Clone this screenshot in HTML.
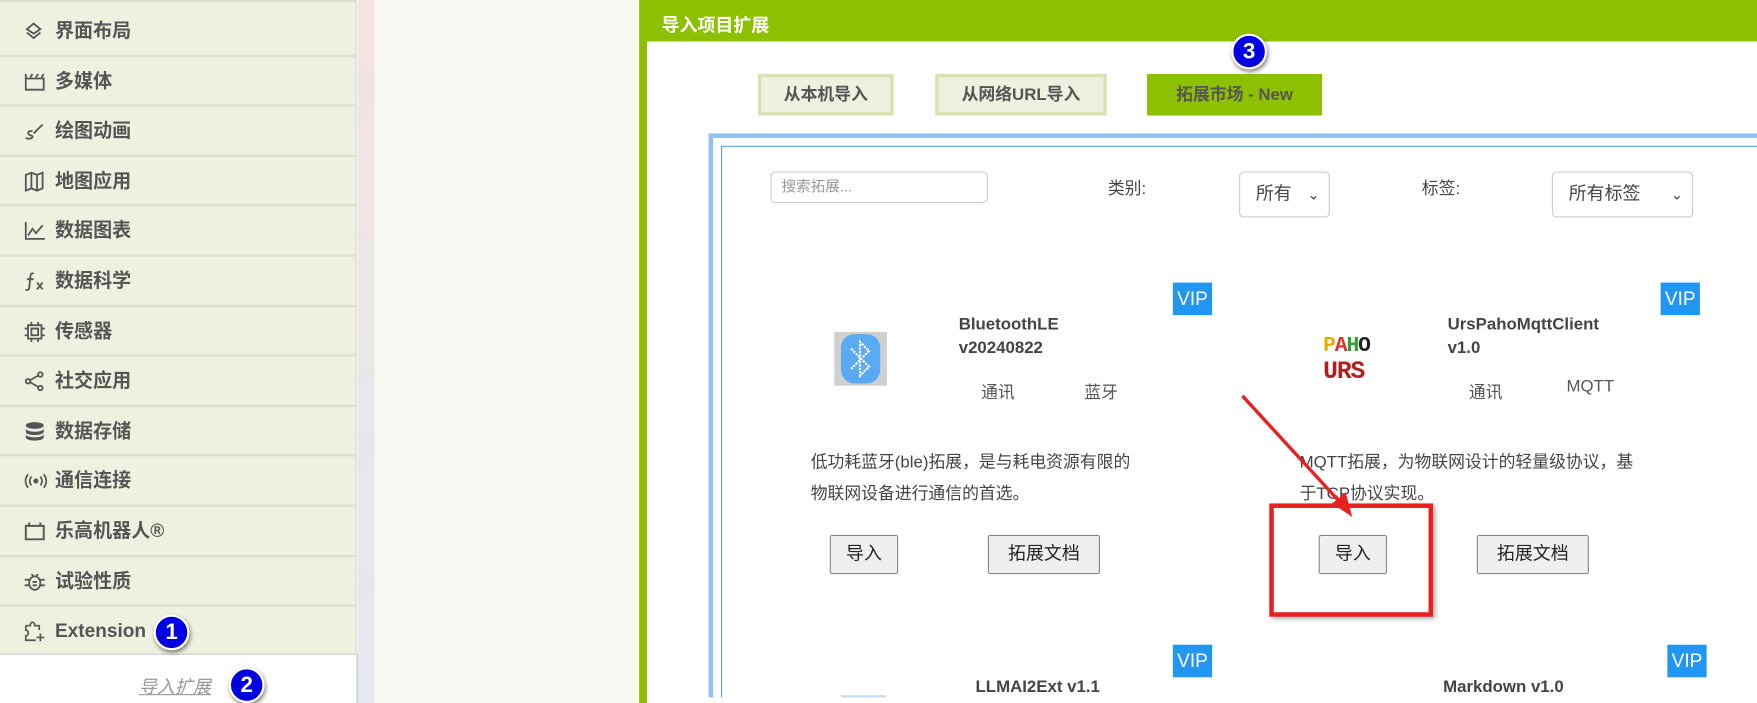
<!DOCTYPE html>
<html><head><meta charset="utf-8">
<style>
*{margin:0;padding:0;box-sizing:border-box}
html,body{width:1757px;height:703px;overflow:hidden;background:#f7f8f2;font-family:"Liberation Sans","Noto Sans CJK SC",sans-serif}
#w{position:absolute;left:0;top:0;width:1567px;height:627px;transform:scale(1.1213);transform-origin:0 0;overflow:hidden}
.a{position:absolute}
.side{left:0;top:0;width:318px;height:627px;background:#eef1e0;border-right:1px solid #d8d8d8;border-top:2px solid #dcdfd0}
.row{position:absolute;left:0;width:318px;height:44.6px;border-bottom:2px solid #dcdfd0;color:#555;font-weight:bold;font-size:17px;line-height:43px}
.row span.t{position:absolute;left:49px;top:0}
.row svg{position:absolute;left:21px;top:13px}
.strip{left:319px;top:0;width:15px;height:627px;background:linear-gradient(#f2e4e0,#e4e8f0)}
.badge{position:absolute;width:32px;height:32px;border-radius:50%;background:#0000e0;color:#fff;font-weight:bold;font-size:20px;text-align:center;line-height:28px;border:2px solid #fff;box-shadow:1px 2px 4px rgba(0,0,0,.5)}
.tab{position:absolute;top:66px;height:37px;border:3px solid #d6e5b0;background:#eef1e0;color:#555;font-weight:bold;font-size:15px;line-height:31px;text-align:center}
.vip{position:absolute;width:35px;height:29px;background:#2196f3;color:#fff;font-size:17px;text-align:center;line-height:29px}
.ttl{position:absolute;color:#444;font-weight:bold;font-size:15px;line-height:21px}
.tag{position:absolute;color:#555;font-size:15px}
.desc{position:absolute;color:#444;font-size:15px;line-height:28px}
.btn{position:absolute;height:35px;border:1px solid #888;border-radius:2px;background:#efefef;color:#222;font-size:16px;text-align:center;line-height:33px}
.sel{position:absolute;height:41px;border:1px solid #ccc;border-radius:4px;background:#fff;color:#444;font-size:16px;line-height:39px;padding-left:14px}
</style></head><body><div id="w">
<div class="a side">
 <div class="row" style="top:4px"><svg width="18" height="18" viewBox="0 0 18 18" fill="none" stroke="#555" stroke-width="1.6"><path d="M9 2 L15 7 L9 11 L3 7 Z M3 10 L9 15 L15 10"/></svg><span class="t">界面布局</span></div>
 <div class="row" style="top:48.6px"><svg width="20" height="18" viewBox="0 0 20 18" fill="none" stroke="#555" stroke-width="1.6"><path d="M2 6 H18 V16 H2 Z M2 6 V2 M6 5 L8 2 M11 5 L13 2 M16 5 L18 2"/></svg><span class="t">多媒体</span></div>
 <div class="row" style="top:93.2px"><svg width="20" height="18" viewBox="0 0 20 18" fill="none" stroke="#555" stroke-width="1.6"><path d="M8 9 C3 8 3 12 7 13 C10 14 6 17 2 15 M9 11 L17 3"/></svg><span class="t">绘图动画</span></div>
 <div class="row" style="top:137.8px"><svg width="20" height="18" viewBox="0 0 20 18" fill="none" stroke="#555" stroke-width="1.6"><path d="M2 3 L7 1 L12 3 L17 1 V15 L12 17 L7 15 L2 17 Z M7 1 V15 M12 3 V17"/></svg><span class="t">地图应用</span></div>
 <div class="row" style="top:182.4px"><svg width="20" height="18" viewBox="0 0 20 18" fill="none" stroke="#555" stroke-width="1.6"><path d="M2 1 V16 H19 M4 13 L8 7 L11 11 L17 4"/></svg><span class="t">数据图表</span></div>
 <div class="row" style="top:227px"><svg width="20" height="18" viewBox="0 0 20 18" fill="none" stroke="#555" stroke-width="1.6"><path d="M9 2 C6 1 6 4 6 6 L5 15 C5 17 2 17 2 16 M3 7 H9 M12 10 L17 16 M17 10 L12 16"/></svg><span class="t">数据科学</span></div>
 <div class="row" style="top:271.6px"><svg width="20" height="18" viewBox="0 0 20 18" fill="none" stroke="#555" stroke-width="1.6"><path d="M4 3 H16 V15 H4 Z M7 6 H13 V12 H7 Z M1 6 H4 M1 12 H4 M16 6 H19 M16 12 H19 M7 0 V3 M13 0 V3 M7 15 V18 M13 15 V18"/></svg><span class="t">传感器</span></div>
 <div class="row" style="top:316.2px"><svg width="20" height="18" viewBox="0 0 20 18" fill="none" stroke="#555" stroke-width="1.6"><circle cx="15" cy="3" r="2"/><circle cx="4" cy="9" r="2"/><circle cx="15" cy="15" r="2"/><path d="M6 8 L13 4 M6 10 L13 14"/></svg><span class="t">社交应用</span></div>
 <div class="row" style="top:360.8px"><svg width="20" height="18" viewBox="0 0 20 18" fill="#555"><ellipse cx="10" cy="3.5" rx="8" ry="3"/><path d="M2 6 C2 10 18 10 18 6 V9 C18 13 2 13 2 9Z M2 11 C2 15 18 15 18 11 V14 C18 18 2 18 2 14Z"/></svg><span class="t">数据存储</span></div>
 <div class="row" style="top:405.4px"><svg width="22" height="18" viewBox="0 0 22 18" fill="none" stroke="#555" stroke-width="1.5"><path d="M4 3 C1 7 1 11 4 15 M7 5 C5 8 5 10 7 13 M18 3 C21 7 21 11 18 15 M15 5 C17 8 17 10 15 13"/><circle cx="11" cy="9" r="1.5" fill="#555"/></svg><span class="t">通信连接</span></div>
 <div class="row" style="top:450px"><svg width="20" height="18" viewBox="0 0 20 18" fill="none" stroke="#555" stroke-width="1.7"><path d="M2 4 H18 V16 H2 Z M5 4 V1 M15 4 V1"/></svg><span class="t">乐高机器人®</span></div>
 <div class="row" style="top:494.6px"><svg width="20" height="18" viewBox="0 0 20 18" fill="none" stroke="#555" stroke-width="1.6"><ellipse cx="10" cy="10" rx="5" ry="6"/><path d="M1 7 H5 M1 12 H5 M15 7 H19 M15 12 H19 M7 2 L9 4 M13 2 L11 4 M8 9 H12 M8 12 H12"/></svg><span class="t">试验性质</span></div>
 <div class="row" style="top:539.2px;border-bottom:1px solid #ccc"><svg width="20" height="20" viewBox="0 0 20 20" style="top:12px" fill="none" stroke="#555" stroke-width="1.5"><path d="M2 5 H6 C6 1 10 1 10 5 H14 V9 M2 5 V9 C5 9 5 14 2 14 V18 H11 M15 12 V19 M11.5 15.5 H18.5"/></svg><span class="t">Extension</span></div>
</div>
<div class="a" style="left:0;top:583px;width:319px;height:44px;background:#fff;border-right:1px solid #bbb;border-top:1px solid #ccc"></div>
<div class="a" style="left:124px;top:599px;color:#999;font-size:16px;font-style:italic;text-decoration:underline">导入扩展</div>
<div class="badge" style="left:137px;top:548px">1</div>
<div class="badge" style="left:204px;top:595px">2</div>
<div class="a strip"></div>

<div class="a" style="left:570px;top:0;width:997px;height:627px;background:#8dc000"></div>
<div class="a" style="left:577px;top:37px;width:990px;height:590px;background:#fff"></div>
<div class="a" style="left:590px;top:9px;color:#fff;font-weight:bold;font-size:16px">导入项目扩展</div>
<div class="tab" style="left:676px;width:121px">从本机导入</div>
<div class="tab" style="left:834px;width:153px">从网络URL导入</div>
<div class="tab" style="left:1023px;width:156px;background:#8dc000;border-color:#8dc000;color:#555">拓展市场 - New</div>
<div class="badge" style="left:1098px;top:30px">3</div>

<div class="a" style="left:632px;top:119px;width:935px;height:508px;border-left:4px solid #94c2f0;border-top:4px solid #94c2f0"></div>
<div class="a" style="left:643px;top:130px;width:924px;height:497px;border-left:1px solid #6a9ee0;border-top:1px solid #6a9ee0"></div>

<div class="a" style="left:687px;top:153px;width:194px;height:28px;border:1px solid #ccc;border-radius:4px;color:#999;font-size:13px;line-height:26px;padding-left:9px">搜索拓展...</div>
<div class="a" style="left:988px;top:157px;color:#444;font-size:15px">类别:</div>
<div class="sel" style="left:1105px;top:153px;width:81px">所有<span style="position:absolute;right:8px;font-size:13px">&#8964;</span></div>
<div class="a" style="left:1268px;top:157px;color:#444;font-size:15px">标签:</div>
<div class="sel" style="left:1384px;top:153px;width:126px">所有标签<span style="position:absolute;right:8px;font-size:13px">&#8964;</span></div>

<div class="vip" style="left:1046px;top:252px">VIP</div>
<div class="a" style="left:744px;top:296px;width:47px;height:48px;background:#d0d0d0"><div style="position:absolute;left:6px;top:2px;width:35px;height:44px;border-radius:12px;background:#5aaaf5"></div><svg class="a" style="left:0;top:0" width="47" height="48" viewBox="0 0 47 48" fill="none" stroke="#fff" stroke-width="2" stroke-dasharray="2 1"><path d="M15 15 L31 31 L23 39 V9 L31 17 L15 33"/></svg></div>
<div class="ttl" style="left:855px;top:279px">BluetoothLE<br>v20240822</div>
<div class="tag" style="left:875px;top:339px">通讯</div>
<div class="tag" style="left:967px;top:339px">蓝牙</div>
<div class="desc" style="left:723px;top:399px">低功耗蓝牙(ble)拓展，是与耗电资源有限的<br>物联网设备进行通信的首选。</div>
<div class="btn" style="left:740px;top:477px;width:61px">导入</div>
<div class="btn" style="left:881px;top:477px;width:100px">拓展文档</div>

<div class="vip" style="left:1481px;top:252px">VIP</div>
<div class="a" style="left:1180px;top:297px;font-family:'Liberation Mono',monospace;font-weight:bold;font-size:19px;line-height:23px;letter-spacing:-1px"><span style="color:#e0b000">P</span><span style="color:#e03030">A</span><span style="color:#30a030">H</span><span style="color:#222">O</span><br><span style="color:#b02020;font-size:22px">URS</span></div>
<div class="ttl" style="left:1291px;top:279px">UrsPahoMqttClient<br>v1.0</div>
<div class="tag" style="left:1310px;top:339px">通讯</div>
<div class="tag" style="left:1397px;top:336px">MQTT</div>
<div class="desc" style="left:1159px;top:399px">MQTT拓展，为物联网设计的轻量级协议，基<br>于TCP协议实现。</div>
<div class="btn" style="left:1176px;top:477px;width:61px">导入</div>
<div class="btn" style="left:1317px;top:477px;width:100px">拓展文档</div>

<div class="a" style="left:1132px;top:449px;width:146px;height:101px;border:4px solid #e82020;box-shadow:2px 2px 4px rgba(0,0,0,.3)"></div>
<svg class="a" style="left:1100px;top:345px" width="120" height="125" viewBox="0 0 120 125"><path d="M8 8 L98 106" stroke="#e82020" stroke-width="3"/><path d="M106 116 L88 104 L100 94 Z" fill="#e82020"/></svg>

<div class="vip" style="left:1046px;top:575px">VIP</div>
<div class="vip" style="left:1487px;top:575px">VIP</div>
<div class="ttl" style="left:870px;top:602px">LLMAI2Ext v1.1</div>
<div class="ttl" style="left:1287px;top:602px">Markdown v1.0</div>
<div class="a" style="left:750px;top:620px;width:40px;height:7px;background:#c8d8f8"></div>
<div class="a" style="left:577px;top:622px;width:990px;height:5px;background:#fff"></div>
</div></body></html>
